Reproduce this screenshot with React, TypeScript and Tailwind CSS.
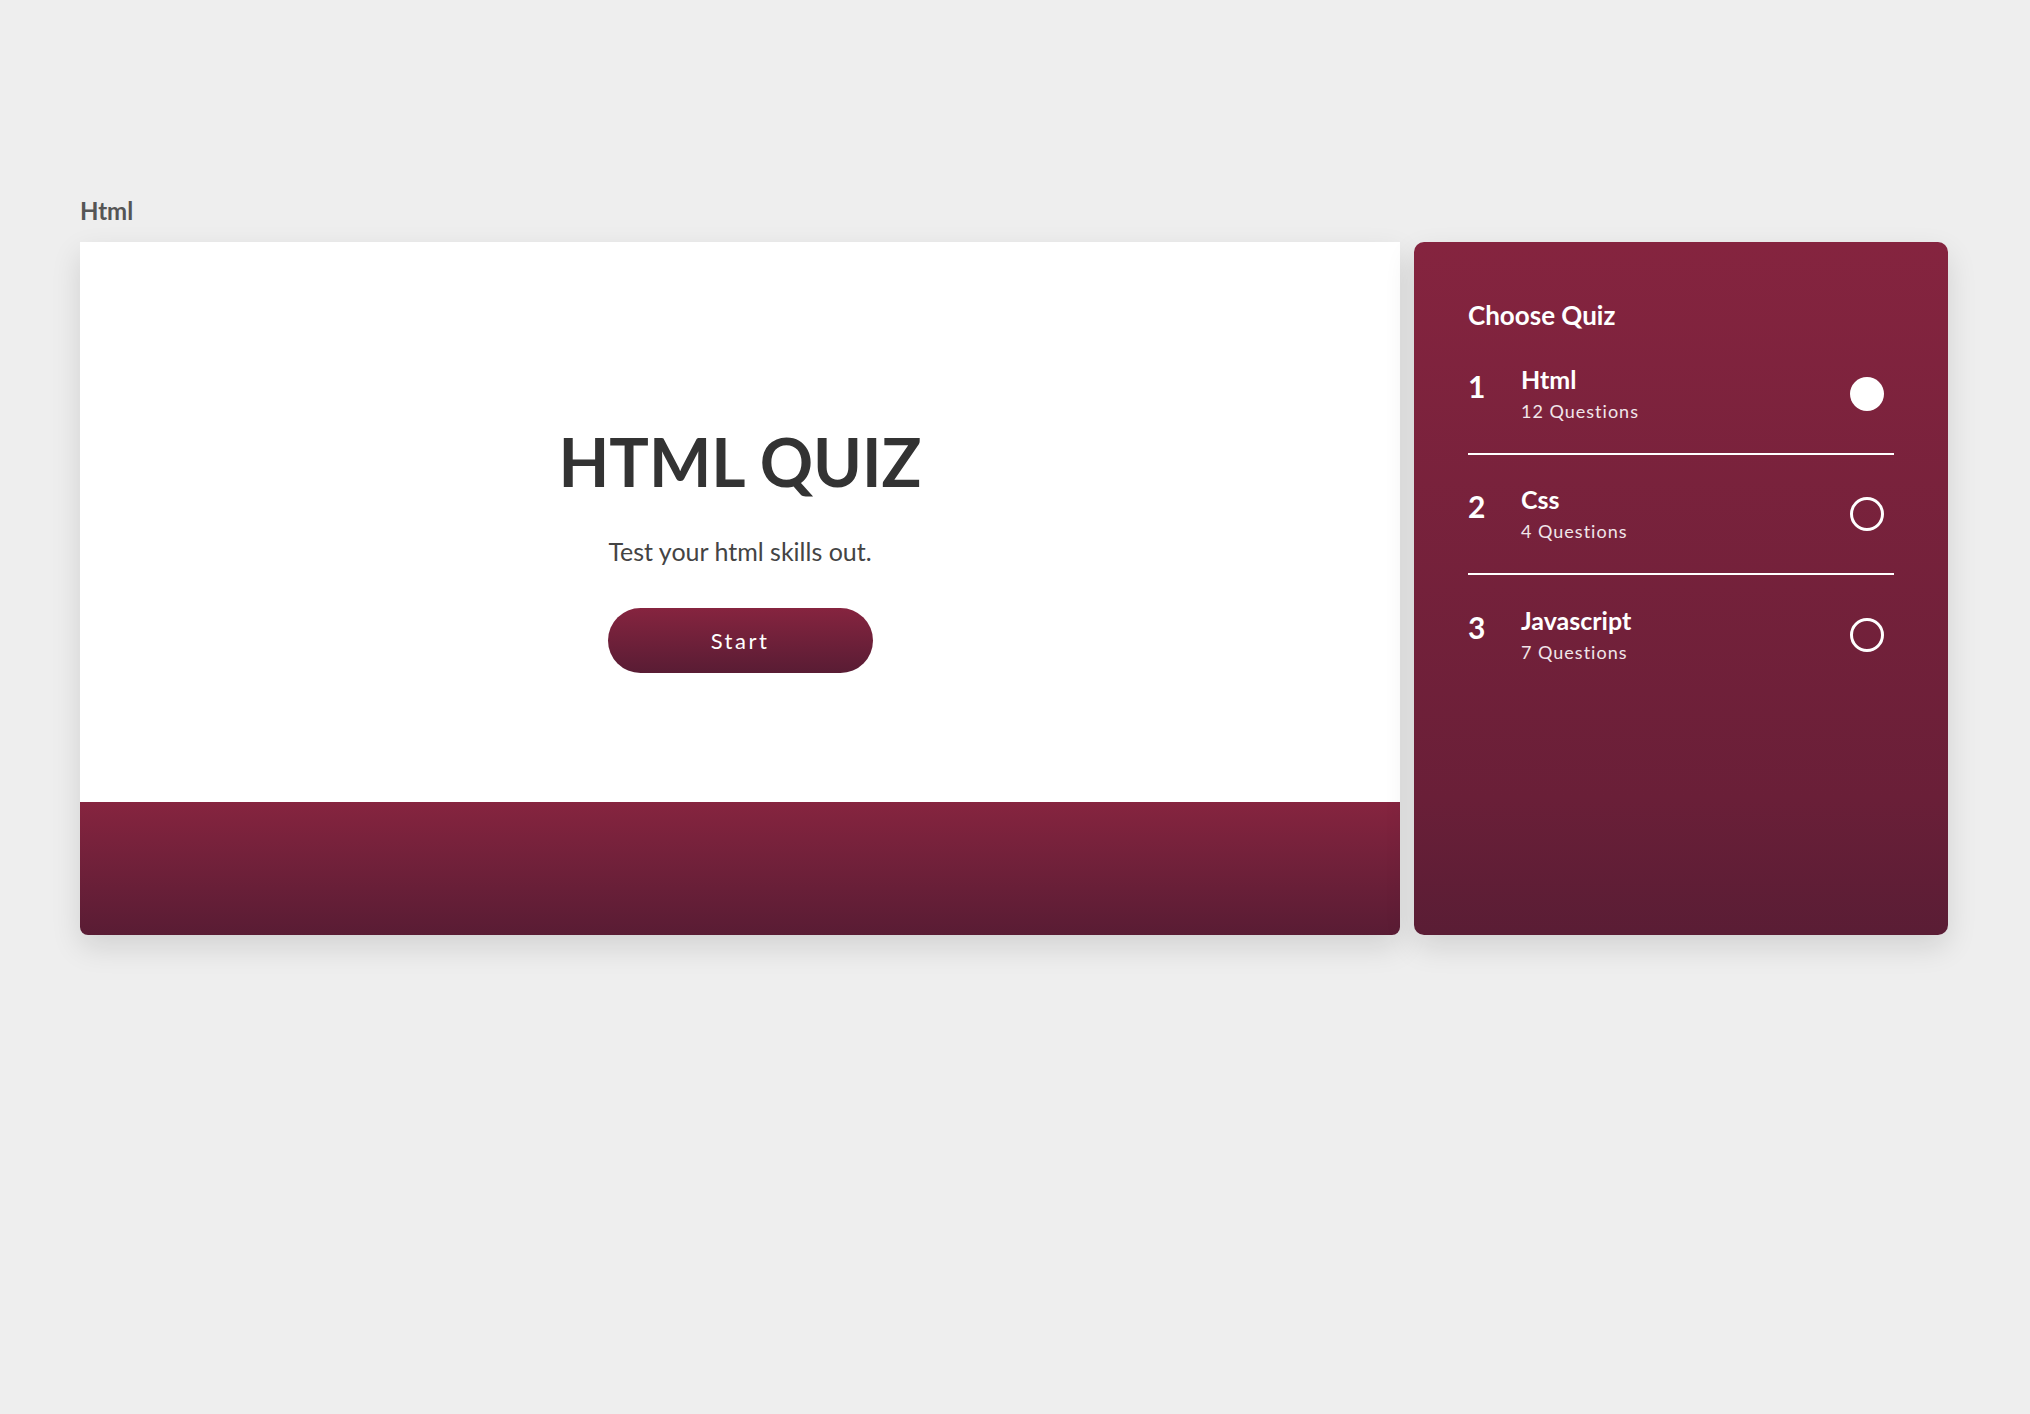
const quizzes = [
  { id: 1, name: "Html", count: 12, active: true },
  { id: 2, name: "Css", count: 4, active: false },
  { id: 3, name: "Javascript", count: 7, active: false },
];

const font = { fontFamily: "Lato, 'Noto Sans', 'Open Sans', sans-serif" };

const QuizRow = ({ id, name, count, active, last }: { id: number; name: string; count: number; active: boolean; last: boolean }) => (
  <div className={`flex h-[120px] items-center ${last ? "" : "border-b-2 border-white"}`}>
    <div className="flex flex-1 items-start">
      <span className="mt-[7px] w-[53px] text-[30px] font-bold leading-[29px] text-white">{id}</span>
      <div className="flex flex-col">
        <span className="text-[25px] font-bold leading-[28px] text-white">{name}</span>
        <span className="mt-[6px] text-[18px] leading-[24px] tracking-[1px] text-[#f1e6ea]">{count} Questions</span>
      </div>
    </div>
    <div
      className={`mr-[10px] h-[34px] w-[34px] rounded-full ${active ? "bg-white" : "border-[3px] border-white"}`}
    />
  </div>
);

export default function App() {
  return (
    <div className="min-h-screen bg-[#eeeeee] pl-[80px] pt-[197px]" style={font}>
      <h3 className="mb-[17px] text-[24px] font-bold leading-[28px] text-[#555555]">Html</h3>

      <div className="flex gap-[14px]">
        {/* quiz card */}
        <div className="flex w-[1320px] flex-col overflow-hidden rounded-b-[8px] shadow-[0_12px_30px_rgba(0,0,0,0.12)]">
          <div className="flex h-[560px] flex-col items-center bg-white pt-[187px]">
            <h1 className="text-[66px] font-bold leading-[66px] text-[#333333]">HTML QUIZ</h1>
            <p className="mt-[41px] text-[25px] leading-[30px] text-[#444444]">Test your html skills out.</p>
            <button className="mt-[42px] h-[65px] w-[265px] rounded-full bg-gradient-to-b from-[#86243f] to-[#591c34] text-[22px] tracking-[2.5px] text-white">
              Start
            </button>
          </div>
          <div className="h-[133px] bg-gradient-to-b from-[#86243f] to-[#591c34]" />
        </div>

        {/* sidebar */}
        <div className="h-[693px] w-[534px] rounded-[10px] bg-gradient-to-b from-[#85243f] via-[#6a1f38] via-80% to-[#5a1d35] px-[54px] pt-[58px] shadow-[0_12px_30px_rgba(0,0,0,0.12)]">
          <h2 className="text-[26px] font-bold leading-[30px] text-white">Choose Quiz</h2>
          <div className="mt-[5px]">
            {quizzes.map((q, i) => (
              <QuizRow key={q.id} {...q} last={i === quizzes.length - 1} />
            ))}
          </div>
        </div>
      </div>
    </div>
  );
}
